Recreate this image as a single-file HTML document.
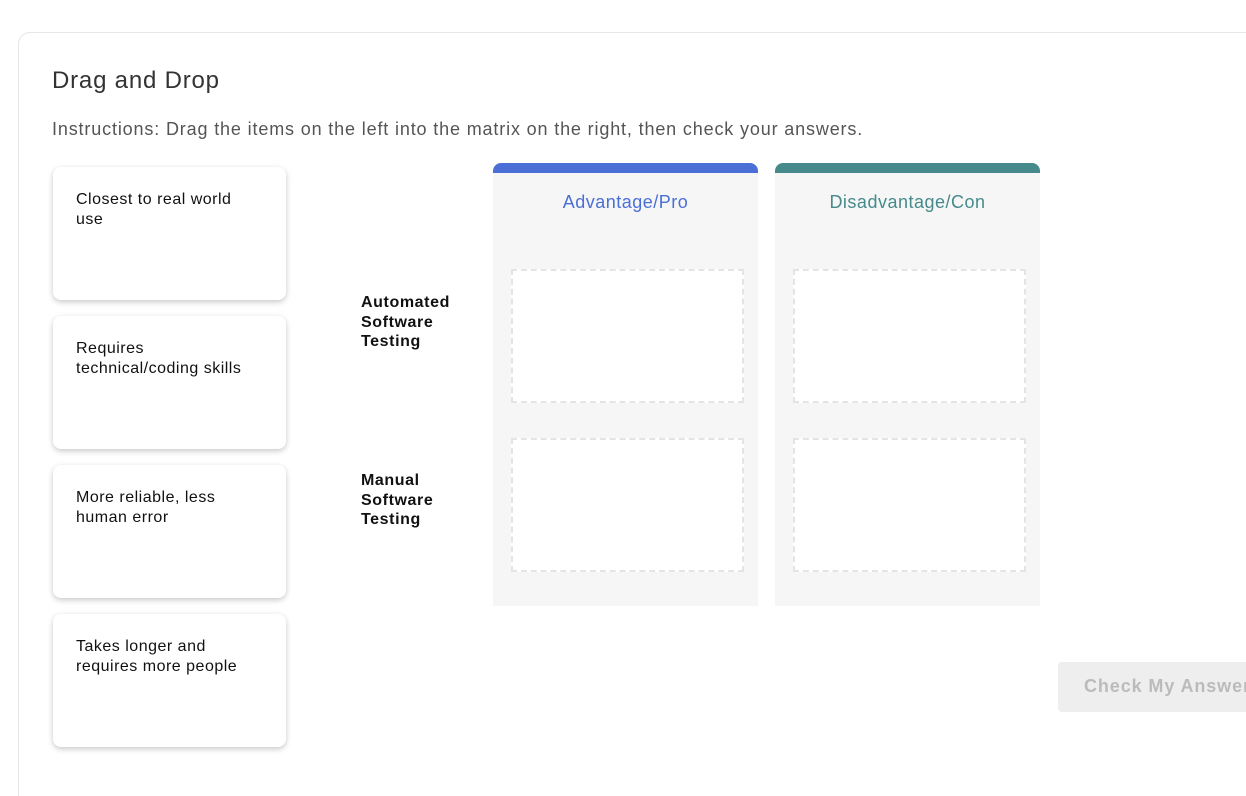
<!DOCTYPE html>
<html><head><style>
*{box-sizing:border-box;margin:0;padding:0}
html,body{width:1246px;height:796px;overflow:hidden}
body{background:#fff;font-family:"Liberation Sans",sans-serif;position:relative}
.box{position:absolute;left:18px;top:32px;width:1300px;height:800px;border:1px solid #e6e6e6;border-radius:12px}
h1{position:absolute;left:52px;top:67px;font-size:24px;font-weight:normal;color:#333;letter-spacing:0.8px}
.ins{position:absolute;left:52px;top:119px;font-size:18px;color:#555;letter-spacing:0.85px;white-space:nowrap}
.card{position:absolute;left:53px;width:233px;height:133px;background:#fff;border-radius:8px;box-shadow:0 2px 6px rgba(0,0,0,.22);padding:23px 10px 0 23px;font-size:16px;line-height:20px;color:#111;letter-spacing:0.5px;white-space:nowrap}
.col{position:absolute;top:163px;width:265px;height:443px;background:#f6f6f6;border-radius:8px 8px 0 0;overflow:hidden}
.bar{height:10px}
.ct{text-align:center;font-size:18px;margin-top:19px;letter-spacing:0.5px}
.drop{position:absolute;left:18px;width:233px;height:134px;background:#fff;border:2px dashed #e4e4e4}
.lbl{position:absolute;left:361px;font-weight:bold;font-size:16px;line-height:19.5px;color:#111;letter-spacing:0.6px}
.btn{position:absolute;left:1058px;top:662px;width:220px;height:50px;background:#eee;border-radius:4px;color:#bbb;font-weight:bold;font-size:18px;line-height:48px;padding-left:26px;white-space:nowrap;letter-spacing:0.9px}
</style></head><body>
<div class="box"></div>
<h1>Drag and Drop</h1>
<div class="ins">Instructions: Drag the items on the left into the matrix on the right, then check your answers.</div>
<div class="card" style="top:167px">Closest to real world<br>use</div>
<div class="card" style="top:316px">Requires<br>technical/coding skills</div>
<div class="card" style="top:465px">More reliable, less<br>human error</div>
<div class="card" style="top:614px">Takes longer and<br>requires more people</div>
<div class="lbl" style="top:293px">Automated<br>Software<br>Testing</div>
<div class="lbl" style="top:471px">Manual<br>Software<br>Testing</div>
<div class="col" style="left:493px"><div class="bar" style="background:#4a6fd6"></div><div class="ct" style="color:#4a6fd6">Advantage/Pro</div>
<div class="drop" style="top:106px"></div><div class="drop" style="top:275px"></div></div>
<div class="col" style="left:775px"><div class="bar" style="background:#468a8c"></div><div class="ct" style="color:#468a8c">Disadvantage/Con</div>
<div class="drop" style="top:106px"></div><div class="drop" style="top:275px"></div></div>
<div class="btn">Check My Answer</div>
</body></html>
